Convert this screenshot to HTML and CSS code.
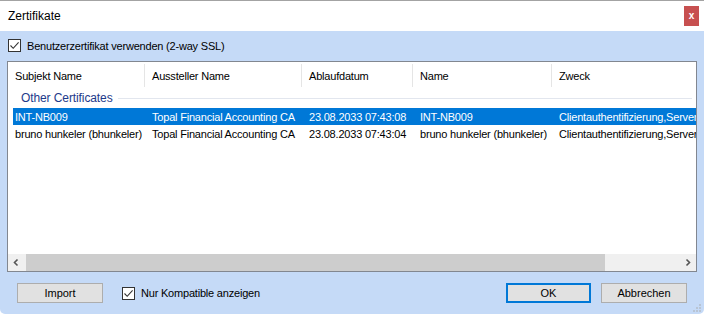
FILE: index.html
```html
<!DOCTYPE html>
<html lang="de">
<head>
<meta charset="utf-8">
<title>Zertifikate</title>
<link rel="stylesheet" href="styles.css">
</head>
<body>
<div class="window">
  <div class="titlebar">
    <span class="title">Zertifikate</span>
    <span class="close">x</span>
  </div>
  <div class="panel">
    <label class="check-row">
      <span class="checkbox"><svg viewBox="0 0 13 13" width="13" height="13"><path d="M2.5 6.5 L5.2 9.3 L10.6 3.3" fill="none" stroke="#333" stroke-width="1.1"/></svg></span>
      <span>Benutzerzertifikat verwenden (2-way SSL)</span>
    </label>
    <div class="list">
      <div class="header">
        <div class="hcell">Subjekt Name</div>
        <div class="hcell">Aussteller Name</div>
        <div class="hcell">Ablaufdatum</div>
        <div class="hcell">Name</div>
        <div class="hcell last">Zweck</div>
      </div>
      <div class="group"><span class="group-label">Other Certificates</span><span class="group-line"></span></div>
      <div class="row selected">
        <div class="cell c1">INT-NB009</div>
        <div class="cell">Topal Financial Accounting CA</div>
        <div class="cell">23.08.2033 07:43:08</div>
        <div class="cell">INT-NB009</div>
        <div class="cell">Clientauthentifizierung,Serverauthentifizierung</div>
      </div>
      <div class="row">
        <div class="cell c1">bruno hunkeler (bhunkeler)</div>
        <div class="cell">Topal Financial Accounting CA</div>
        <div class="cell">23.08.2033 07:43:04</div>
        <div class="cell">bruno hunkeler (bhunkeler)</div>
        <div class="cell">Clientauthentifizierung,Serverauthentifizierung</div>
      </div>
      <div class="spacer"></div>
      <div class="hscroll">
        <span class="arrow"><svg viewBox="0 0 17 17" width="17" height="17"><path d="M9.5 5.5 L6.5 8.5 L9.5 11.5" fill="none" stroke="#555" stroke-width="1.6"/></svg></span>
        <span class="track"><span class="thumb"></span></span>
        <span class="arrow"><svg viewBox="0 0 17 17" width="17" height="17"><path d="M7.5 5.5 L10.5 8.5 L7.5 11.5" fill="none" stroke="#555" stroke-width="1.6"/></svg></span>
      </div>
    </div>
    <div class="footer">
      <button class="btn">Import</button>
      <label class="check-row compat">
        <span class="checkbox"><svg viewBox="0 0 13 13" width="13" height="13"><path d="M2.5 6.5 L5.2 9.3 L10.6 3.3" fill="none" stroke="#333" stroke-width="1.1"/></svg></span>
        <span>Nur Kompatible anzeigen</span>
      </label>
      <span class="grow"></span>
      <button class="btn default">OK</button>
      <button class="btn">Abbrechen</button>
    </div>
    <svg class="grip" viewBox="0 0 10 10" width="10" height="10">
      <rect x="7" y="1" width="2" height="2" fill="#b8c4d4"/>
      <rect x="4" y="4" width="2" height="2" fill="#b8c4d4"/>
      <rect x="7" y="4" width="2" height="2" fill="#b8c4d4"/>
      <rect x="1" y="7" width="2" height="2" fill="#b8c4d4"/>
      <rect x="4" y="7" width="2" height="2" fill="#b8c4d4"/>
      <rect x="7" y="7" width="2" height="2" fill="#b8c4d4"/>
    </svg>
  </div>
</div>
</body>
</html>
```

FILE: styles.css
```css
* { box-sizing: border-box; }
body {
  margin: 0;
  background: #ffffff;
  font-family: "Liberation Sans", Arial, sans-serif;
  font-size: 11px;
  letter-spacing: -0.2px;
  color: #000;
}
.window {
  width: 704px;
  height: 317px;
  display: flex;
  flex-direction: column;
  background: #ffffff;
}
.titlebar {
  height: 31px;
  border-top: 1px solid #a3a3a3;
  display: flex;
  align-items: center;
  justify-content: space-between;
  padding: 0 5px 0 8px;
  flex: none;
}
.title {
  font-size: 12px;
  letter-spacing: 0;
}
.close {
  width: 15px;
  height: 20px;
  background: #c75050;
  color: #fff;
  font-weight: bold;
  font-size: 10px;
  letter-spacing: 0;
  display: flex;
  align-items: center;
  justify-content: center;
  line-height: 1;
}
.panel {
  position: relative;
  height: 283px;
  background: #c5daf7;
  border-bottom-left-radius: 5px;
  border-bottom-right-radius: 5px;
  padding: 8px 7px 0 7px;
  display: flex;
  flex-direction: column;
}
.check-row {
  display: flex;
  align-items: center;
  gap: 6px;
  height: 13px;
  padding-left: 1px;
}
.checkbox {
  width: 13px;
  height: 13px;
  border: 1px solid #333;
  background: #fff;
  position: relative;
  flex: none;
}
.checkbox svg {
  position: absolute;
  left: -1px;
  top: -1px;
}
.list {
  margin-top: 9px;
  height: 211px;
  border: 1px solid #828790;
  background: #fff;
  display: flex;
  flex-direction: column;
  overflow: hidden;
}
.header, .row {
  display: grid;
  grid-template-columns: 137px 157px 111px 139px 300px;
  white-space: nowrap;
}
.header {
  height: 26px;
  flex: none;
}
.hcell {
  padding-left: 7px;
  display: flex;
  align-items: center;
  border-right: 1px solid #e5e5e5;
  margin: 2px 0 1px 0;
}
.hcell.last { border-right: none; }
.group {
  height: 20px;
  display: flex;
  align-items: center;
  padding-left: 13px;
  flex: none;
}
.group-label {
  color: #1e3a8a;
  font-size: 12px;
  letter-spacing: -0.1px;
}
.group-line {
  flex: 1;
  height: 1px;
  background: #e2e6ee;
  margin: 0 4px 0 5px;
}
.row {
  height: 17px;
  align-items: center;
  flex: none;
  margin-left: 5px;
  grid-template-columns: 132px 157px 111px 139px 300px;
}
.row.selected {
  background: #0078d7;
  color: #fff;
}
.cell {
  padding-left: 7px;
  overflow: hidden;
}
.cell.c1 { padding-left: 2px; }
.spacer { flex: 1; }
.hscroll {
  height: 17px;
  display: flex;
  background: #f0f0f0;
  flex: none;
}
.arrow {
  width: 17px;
  height: 17px;
  flex: none;
}
.track {
  flex: 1;
  display: flex;
  padding-left: 1px;
}
.thumb {
  width: 579px;
  background: #cdcdcd;
}
.footer {
  display: flex;
  align-items: center;
  margin-top: 11px;
  padding: 0 10px;
  height: 20px;
}
.btn {
  font: inherit;
  font-size: 11px;
  height: 20px;
  width: 86px;
  background: #e1e1e1;
  border: 1px solid #adadad;
  padding: 0;
  color: #000;
}
.btn.default {
  border: 2px solid #0078d7;
  width: 85px;
  margin-right: 10px;
}
.compat {
  margin-left: 18px;
}
.grow { flex: 1; }
.grip {
  position: absolute;
  right: 2px;
  bottom: 1px;
}
```
